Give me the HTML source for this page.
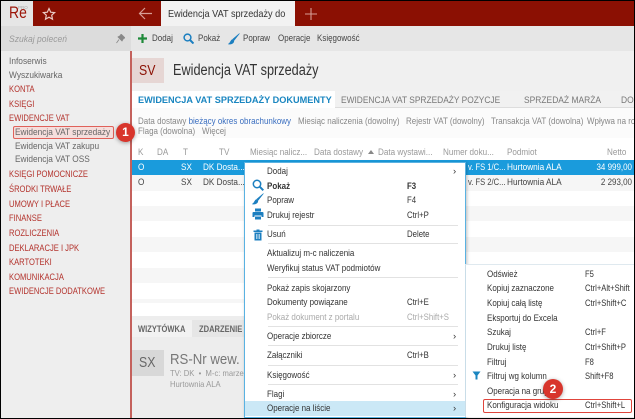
<!DOCTYPE html>
<html><head><meta charset="utf-8">
<style>
html,body{margin:0;padding:0;background:#000}
#p{position:relative;width:633px;height:417px;margin:1px;overflow:hidden;background:#eee;font-family:"Liberation Sans",sans-serif;font-size:9.5px;color:#444;filter:blur(.3px)}
#p div{position:absolute}
.t{white-space:nowrap;line-height:12px;transform-origin:0 50%;transform:scaleX(var(--x,.86))}
.rt{transform-origin:100% 50%;text-align:right}
.r{color:#b3322c;font-size:9.5px;left:8px;--x:.8}
.s{color:#666;left:8px;--x:.88}
.sub{color:#666;left:14px;--x:.875}
.h{color:#999;font-size:9px;--x:.9}
.f{color:#888;font-size:9.5px;--x:.84}
.tb{color:#444;font-size:9.5px;--x:.84}
.m{color:#333;left:266px;margin-top:1px;--x:.84}
.k{color:#333;left:406px;margin-top:1px;--x:.82}
.a{color:#333;left:452px;margin-top:1px;--x:1}
.n{color:#333;left:486px;margin-top:1px;--x:.84}
.q{color:#333;left:584px;margin-top:1px;--x:.8}
.sep{left:267px;width:190px;height:1px;background:#e2e2e2}
.w{color:#fff}
.b{border-radius:50%;background:#d8352c;color:#fff;text-align:center;font-size:12px;font-weight:bold;box-shadow:0 1px 4px rgba(0,0,0,.35)}
</style></head><body><div id="p">
<!-- top bar -->
<div style="left:0;top:0;width:633px;height:25px;background:#8b1003"></div>
<div style="left:0;top:0;width:32px;height:25px;background:#e6e6e6"></div>
<div class="t" style="left:8px;top:1px;font-size:17px;line-height:22px;color:#9c1508;--x:.82">Re</div>
<div class="t" style="left:17px;top:4px;font-size:4.500px;line-height:6px;color:#aaa;--x:1">PRO</div>
<svg style="position:absolute;left:41px;top:6px" width="14" height="14" viewBox="0 0 14 14"><path d="M7 1.500L8.700 5.200 12.600 5.600 9.700 8.200 10.500 12.200 7 10.200 3.500 12.200 4.300 8.200 1.400 5.600 5.300 5.200Z" fill="none" stroke="#e9c9c4" stroke-width="1.200"/></svg>
<svg style="position:absolute;left:137px;top:6px" width="15" height="13" viewBox="0 0 15 13"><path d="M14 6.500H1.500M7 1L1.500 6.500 7 12" fill="none" stroke="#d79d95" stroke-width="1.200"/></svg>
<div style="left:160px;top:0;width:134px;height:25px;background:#f2f2f2"></div>
<div class="t" style="left:167px;top:7px;color:#333;font-size:10.500px;width:138px;overflow:hidden;--x:.87">Ewidencja VAT sprzedaży do</div>
<svg style="position:absolute;left:304px;top:7px" width="12" height="12" viewBox="0 0 12 12"><path d="M6 0V12M0 6H12" stroke="#d79d95" stroke-width="1.100"/></svg>
<!-- toolbar -->
<div style="left:130px;top:25px;width:503px;height:25px;background:#e6e6e6"></div>
<div style="left:0;top:25px;width:130px;height:25px;background:#dcdcdc"></div>
<div class="t" style="left:8px;top:33px;font-style:italic;color:#9a9a9a;--x:.9">Szukaj poleceń</div>
<svg style="position:absolute;left:115px;top:33px" width="9" height="10" viewBox="0 0 9 10"><path d="M5 0L9 4 7.500 4.500 6 7 2 3 4.500 1.500ZM3 5.500L0.500 9" fill="#888" stroke="#888" stroke-width=".8"/></svg>
<svg style="position:absolute;left:136px;top:32px" width="11" height="11" viewBox="0 0 11 11"><path d="M5.500 1V10M1 5.500H10" stroke="#1f8a3a" stroke-width="2.200"/></svg>
<div class="t tb" style="left:151px;top:32px">Dodaj</div>
<svg style="position:absolute;left:182px;top:32px" width="11" height="11" viewBox="0 0 11 11"><circle cx="4.500" cy="4.500" r="3.400" fill="none" stroke="#1c7fc0" stroke-width="1.500"/><path d="M7 7L10.500 10.500" stroke="#1c7fc0" stroke-width="2"/></svg>
<div class="t tb" style="left:197px;top:32px">Pokaż</div>
<svg style="position:absolute;left:227px;top:32px" width="12" height="12" viewBox="0 0 12 12"><path d="M11.500 0.500L5 6 6.200 7.200 11.500 0.500ZM4.500 6.500C2.500 7 3 9.500 0.500 11 3.500 11.500 6 10 5.800 7.700Z" fill="#1c7fc0" stroke="#1c7fc0" stroke-width=".6"/></svg>
<div class="t tb" style="left:242px;top:32px">Popraw</div>
<div class="t tb" style="left:277px;top:32px">Operacje</div>
<div class="t tb" style="left:316px;top:32px">Księgowość</div>
<!-- sidebar -->
<div style="left:129px;top:50px;width:1.500px;height:367px;background:#c4615c"></div>
<div class="t s" style="top:55px">Infoserwis</div>
<div class="t s" style="top:69px">Wyszukiwarka</div>
<div class="t r" style="top:83px">KONTA</div>
<div class="t r" style="top:98px">KSIĘGI</div>
<div class="t r" style="top:112px">EWIDENCJE VAT</div>
<div style="left:12px;top:125px;width:101px;height:13px;background:#f5dedc;border:1px solid #e0615a;border-radius:2px;box-sizing:border-box"></div>
<div class="t sub" style="top:126px">Ewidencja VAT sprzedaży</div>
<div class="t sub" style="top:140px">Ewidencja VAT zakupu</div>
<div class="t sub" style="top:153px">Ewidencja VAT OSS</div>
<div class="t r" style="top:168px">KSIĘGI POMOCNICZE</div>
<div class="t r" style="top:183px">ŚRODKI TRWAŁE</div>
<div class="t r" style="top:198px">UMOWY I PŁACE</div>
<div class="t r" style="top:212px">FINANSE</div>
<div class="t r" style="top:227px">ROZLICZENIA</div>
<div class="t r" style="top:242px">DEKLARACJE I JPK</div>
<div class="t r" style="top:256px">KARTOTEKI</div>
<div class="t r" style="top:271px">KOMUNIKACJA</div>
<div class="t r" style="top:285px">EWIDENCJE DODATKOWE</div>
<!-- header -->
<div style="left:131px;top:50px;width:502px;height:40px;background:#f0f0f0"></div>
<div style="left:131px;top:57px;width:32px;height:25px;background:#e6d6d4"></div>
<div class="t" style="left:138px;top:61px;font-size:15px;line-height:17px;color:#8b1003;--x:.82">SV</div>
<div class="t" style="left:172px;top:60px;font-size:15.500px;line-height:20px;color:#333;--x:.82">Ewidencja VAT sprzedaży</div>
<!-- tabs -->
<div style="left:131px;top:90px;width:502px;height:17px;background:#f1f1f1;border-bottom:1px solid #ddd;box-sizing:border-box"></div>
<div style="left:131px;top:90px;width:203px;height:18px;background:#fff"></div>
<div class="t" style="left:137px;top:94px;font-weight:bold;color:#1a86c0;--x:.965">EWIDENCJA VAT SPRZEDAŻY DOKUMENTY</div>
<div class="t" style="left:340px;top:94px;color:#777;--x:.88">EWIDENCJA VAT SPRZEDAŻY POZYCJE</div>
<div class="t" style="left:523px;top:94px;color:#777;--x:.89">SPRZEDAŻ MARŻA</div>
<div class="t" style="left:620px;top:94px;color:#777;--x:.89">DO</div>
<!-- filters -->
<div style="left:131px;top:107px;width:502px;height:30px;background:#fbfbfb"></div>
<div class="t f" style="left:137px;top:115px">Data dostawy <span style="color:#3b6fc0">bieżący okres obrachunkowy</span></div>
<div class="t f" style="left:297px;top:115px">Miesiąc naliczenia (dowolny)</div>
<div class="t f" style="left:405px;top:115px">Rejestr VAT (dowolny)</div>
<div class="t f" style="left:490px;top:115px">Transakcja VAT (dowolna)</div>
<div class="t f" style="left:586px;top:115px">Wpływa na rozl</div>
<div class="t f" style="left:137px;top:125px">Flaga (dowolna)</div>
<div class="t f" style="left:201px;top:125px">Więcej</div>
<!-- table -->
<div style="left:131px;top:137px;width:502px;height:179px;background:#fff"></div>
<div class="t h" style="left:137px;top:145px">K</div>
<div class="t h" style="left:156px;top:145px">DA</div>
<div class="t h" style="left:182px;top:145px">T</div>
<div class="t h" style="left:218px;top:145px">TV</div>
<div class="t h" style="left:249px;top:145px">Miesiąc nalicz...</div>
<div class="t h" style="left:313px;top:145px">Data dostawy</div>
<div style="left:367px;top:149px;width:0;height:0;border:3px solid transparent;border-bottom:4px solid #888;border-top:0"></div>
<div class="t h" style="left:377px;top:145px">Data wystawi...</div>
<div class="t h" style="left:442px;top:145px">Numer doku...</div>
<div class="t h" style="left:506px;top:145px">Podmiot</div>
<div class="t h" style="left:606px;top:145px">Netto</div>
<div style="left:131px;top:159px;width:502px;height:15px;background:#1a9bdc"></div>
<div style="left:131px;top:174px;width:502px;height:16px;background:#f6f6f6"></div>
<div style="left:131px;top:205px;width:502px;height:15px;background:#f6f6f6"></div>
<div style="left:131px;top:236px;width:502px;height:15px;background:#f6f6f6"></div>
<div style="left:131px;top:267px;width:502px;height:15px;background:#f6f6f6"></div>
<div style="left:131px;top:298px;width:502px;height:4px;background:#f6f6f6"></div>
<div class="t w" style="left:137px;top:161px">O</div>
<div class="t w" style="left:180px;top:161px">SX</div>
<div class="t w" style="left:202px;top:161px">DK Dosta...</div>
<div class="t w" style="left:467px;top:161px;--x:.8">v. FS 1/C...</div>
<div class="t w" style="left:506px;top:161px;--x:.87">Hurtownia ALA</div>
<div class="t w rt" style="left:580px;top:161px;width:51px;--x:.84">34 999,00</div>
<div class="t" style="left:137px;top:176px">O</div>
<div class="t" style="left:180px;top:176px">SX</div>
<div class="t" style="left:202px;top:176px">DK Dosta...</div>
<div class="t" style="left:467px;top:176px;--x:.8">v. FS 2/C...</div>
<div class="t" style="left:506px;top:176px;--x:.87">Hurtownia ALA</div>
<div class="t rt" style="left:580px;top:176px;width:51px;--x:.84">2 293,00</div>
<!-- lower panel -->
<div style="left:131px;top:315px;width:502px;height:102px;background:#ededed"></div>
<div style="left:131px;top:319px;width:60px;height:17px;background:#f2f2f2"></div>
<div style="left:191px;top:319px;width:442px;height:17px;background:#e6e6e6"></div>
<div class="t" style="left:137px;top:322px;font-size:9px;font-weight:bold;color:#666;--x:.84">WIZYTÓWKA</div>
<div class="t" style="left:198px;top:322px;font-size:9px;font-weight:bold;color:#666;--x:.84">ZDARZENIE</div>
<div style="left:131px;top:349px;width:32px;height:26px;background:#d8d8d8"></div>
<div class="t" style="left:138px;top:353px;font-size:15px;line-height:17px;color:#666;--x:.82">SX</div>
<div class="t" style="left:169px;top:350px;font-size:15px;line-height:18px;color:#777;--x:.88">RS-Nr wew. F</div>
<div class="t" style="left:169px;top:366px;font-size:8.500px;color:#999;--x:.9">TV: DK &nbsp;•&nbsp; M-c: marzec</div>
<div class="t" style="left:169px;top:377px;font-size:8.500px;color:#999;--x:.9">Hurtownia ALA</div>
<!-- context menu -->
<div style="left:243px;top:161px;width:222px;height:256px;background:#fff;border:1px solid #59b2e2;box-sizing:border-box;box-shadow:1px 1px 3px rgba(0,0,0,.25)"></div>
<div style="left:244px;top:400px;width:220px;height:15px;background:#cbe8f6"></div>
<div class="t m" style="top:164px">Dodaj</div><div class="t a" style="top:164px">›</div>
<div class="t m" style="top:179px;font-weight:bold">Pokaż</div><div class="t k" style="top:179px;font-weight:bold">F3</div>
<div class="t m" style="top:193px">Popraw</div><div class="t k" style="top:193px">F4</div>
<div class="t m" style="top:208px">Drukuj rejestr</div><div class="t k" style="top:208px">Ctrl+P</div>
<div class="sep" style="top:224px"></div>
<div class="t m" style="top:227px">Usuń</div><div class="t k" style="top:227px">Delete</div>
<div class="sep" style="top:242px"></div>
<div class="t m" style="top:246px">Aktualizuj m-c naliczenia</div>
<div class="t m" style="top:261px">Weryfikuj status VAT podmiotów</div>
<div class="sep" style="top:276px"></div>
<div class="t m" style="top:281px">Pokaż zapis skojarzony</div>
<div class="t m" style="top:295px">Dokumenty powiązane</div><div class="t k" style="top:295px">Ctrl+E</div>
<div class="t m" style="top:310px;color:#aaa">Pokaż dokument z portalu</div><div class="t k" style="top:310px;color:#aaa">Ctrl+Shift+S</div>
<div class="sep" style="top:325px"></div>
<div class="t m" style="top:329px">Operacje zbiorcze</div><div class="t a" style="top:329px">›</div>
<div class="sep" style="top:344px"></div>
<div class="t m" style="top:348px">Załączniki</div><div class="t k" style="top:348px">Ctrl+B</div>
<div class="sep" style="top:364px"></div>
<div class="t m" style="top:368px">Księgowość</div><div class="t a" style="top:368px">›</div>
<div class="sep" style="top:383px"></div>
<div class="t m" style="top:387px">Flagi</div><div class="t a" style="top:387px">›</div>
<div class="t m" style="top:401px">Operacje na liście</div><div class="t a" style="top:401px">›</div>
<svg style="position:absolute;left:251px;top:178px" width="12" height="12" viewBox="0 0 12 12"><circle cx="5" cy="5" r="3.700" fill="none" stroke="#1c7fc0" stroke-width="1.500"/><path d="M7.700 7.700L11.300 11.300" stroke="#1c7fc0" stroke-width="2"/></svg>
<svg style="position:absolute;left:251px;top:192px" width="12" height="12" viewBox="0 0 12 12"><path d="M11.500 0.500L5 6 6.200 7.200 11.500 0.500ZM4.500 6.500C2.500 7 3 9.500 0.500 11 3.500 11.500 6 10 5.800 7.700Z" fill="#1c7fc0" stroke="#1c7fc0" stroke-width=".6"/></svg>
<svg style="position:absolute;left:251px;top:207px" width="12" height="12" viewBox="0 0 12 12"><path d="M3 0.500H9V3.500H3ZM1.500 4H10.500Q11.500 4 11.500 5V9H9.500V7.500H2.500V9H0.500V5Q0.500 4 1.500 4ZM3 8.500H9V11.500H3Z" fill="#1c7fc0"/></svg>
<svg style="position:absolute;left:252px;top:228px" width="10" height="12" viewBox="0 0 10 12"><path d="M0.500 1.500H9.500V3H0.500ZM3.500 0.500H6.500V1.500H3.500ZM1.500 3.500H8.500V11.500H1.500Z" fill="#1c7fc0"/><path d="M3.500 5V10M5 5V10M6.500 5V10" stroke="#fff" stroke-width=".6"/></svg>
<!-- submenu -->
<div style="left:464px;top:263px;width:169px;height:153px;background:#fff;border-left:1px solid #c9dde8;border-top:1px solid #dfe9ef;box-sizing:border-box"></div>
<div class="t n" style="top:267px">Odśwież</div><div class="t q" style="top:267px">F5</div>
<div class="t n" style="top:281px">Kopiuj zaznaczone</div><div class="t q" style="top:281px">Ctrl+Alt+Shift</div>
<div class="t n" style="top:296px">Kopiuj całą listę</div><div class="t q" style="top:296px">Ctrl+Shift+C</div>
<div class="t n" style="top:311px">Eksportuj do Excela</div>
<div class="t n" style="top:325px">Szukaj</div><div class="t q" style="top:325px">Ctrl+F</div>
<div class="t n" style="top:340px">Drukuj listę</div><div class="t q" style="top:340px">Ctrl+Shift+P</div>
<div class="t n" style="top:355px">Filtruj</div><div class="t q" style="top:355px">F8</div>
<div class="t n" style="top:369px">Filtruj wg kolumn</div><div class="t q" style="top:369px">Shift+F8</div>
<div class="t n" style="top:384px">Operacja na grupie</div>
<div class="t n" style="top:398px">Konfiguracja widoku</div><div class="t q" style="top:398px">Ctrl+Shift+L</div>
<svg style="position:absolute;left:471px;top:370px" width="9" height="9" viewBox="0 0 9 9"><path d="M0.500 0.500H8.500L5.500 4.500V8.500H3.500V4.500Z" fill="#1a86c0"/></svg>
<div style="left:482px;top:398px;width:149px;height:14px;border:1px solid #e0453c;border-radius:2px;box-sizing:border-box"></div>
<!-- badges -->
<div class="b" style="left:115px;top:122px;width:19px;height:19px;line-height:19px">1</div>
<div class="b" style="left:542px;top:378px;width:20px;height:20px;line-height:20px">2</div>
</div></body></html>
